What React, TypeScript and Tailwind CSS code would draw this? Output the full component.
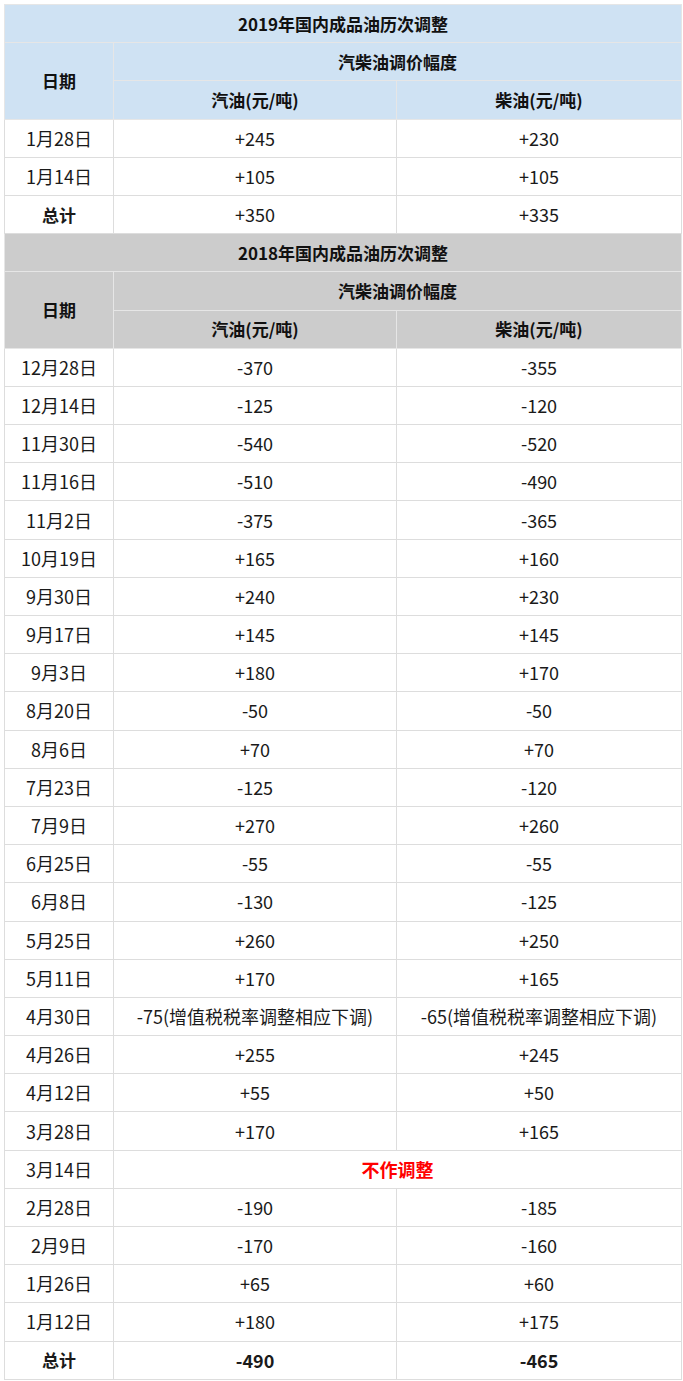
type Row = [string, string, string];

const rows2019: Row[] = [
  ["1月28日", "+245", "+230"],
  ["1月14日", "+105", "+105"],
];

const rows2018: Row[] = [
  ["12月28日", "-370", "-355"],
  ["12月14日", "-125", "-120"],
  ["11月30日", "-540", "-520"],
  ["11月16日", "-510", "-490"],
  ["11月2日", "-375", "-365"],
  ["10月19日", "+165", "+160"],
  ["9月30日", "+240", "+230"],
  ["9月17日", "+145", "+145"],
  ["9月3日", "+180", "+170"],
  ["8月20日", "-50", "-50"],
  ["8月6日", "+70", "+70"],
  ["7月23日", "-125", "-120"],
  ["7月9日", "+270", "+260"],
  ["6月25日", "-55", "-55"],
  ["6月8日", "-130", "-125"],
  ["5月25日", "+260", "+250"],
  ["5月11日", "+170", "+165"],
  ["4月30日", "-75(增值税税率调整相应下调)", "-65(增值税税率调整相应下调)"],
  ["4月26日", "+255", "+245"],
  ["4月12日", "+55", "+50"],
  ["3月28日", "+170", "+165"],
];

const rows2018b: Row[] = [
  ["2月28日", "-190", "-185"],
  ["2月9日", "-170", "-160"],
  ["1月26日", "+65", "+60"],
  ["1月12日", "+180", "+175"],
];

const cell = "h-[38.2px] border border-[#dddddd] p-0 text-center align-middle";
const head = "h-[38.2px] border border-[#e6e6e6] p-0 text-center align-middle font-bold text-[17px] text-[#111]";

const Header = ({ year, bg }: { year: string; bg: string }) => (
  <>
    <tr className={bg}>
      <td colSpan={3} className={head}>
        {year}年国内成品油历次调整
      </td>
    </tr>
    <tr className={bg}>
      <td rowSpan={2} className={head}>
        日期
      </td>
      <td colSpan={2} className={head}>
        汽柴油调价幅度
      </td>
    </tr>
    <tr className={bg}>
      <td className={head}>汽油(元/吨)</td>
      <td className={head}>柴油(元/吨)</td>
    </tr>
  </>
);

const DataRow = ({ r }: { r: Row }) => (
  <tr>
    <td className={cell}>{r[0]}</td>
    <td className={cell}>{r[1]}</td>
    <td className={cell}>{r[2]}</td>
  </tr>
);

export default function App() {
  return (
    <div className="min-h-screen bg-white pt-[4px] pl-[4px]">
      <table
        className="w-[677px] table-fixed border-collapse text-[18px] text-[#1a1a1a]"
        style={{ fontFamily: '"Noto Sans CJK SC", "Noto Sans", sans-serif' }}
      >
        <colgroup>
          <col className="w-[109px]" />
          <col className="w-[283px]" />
          <col className="w-[285px]" />
        </colgroup>
        <tbody>
          <Header year="2019" bg="bg-[#cfe2f3]" />
          {rows2019.map((r) => (
            <DataRow key={r[0]} r={r} />
          ))}
          <tr>
            <td className={`${cell} font-bold text-[17px]`}>总计</td>
            <td className={cell}>+350</td>
            <td className={cell}>+335</td>
          </tr>
          <Header year="2018" bg="bg-[#cccccc]" />
          {rows2018.map((r) => (
            <DataRow key={r[0]} r={r} />
          ))}
          <tr>
            <td className={cell}>3月14日</td>
            <td colSpan={2} className={`${cell} font-bold text-[#ff0000]`}>
              不作调整
            </td>
          </tr>
          {rows2018b.map((r) => (
            <DataRow key={r[0]} r={r} />
          ))}
          <tr>
            <td className={`${cell} font-bold text-[17px]`}>总计</td>
            <td className={`${cell} font-bold`}>-490</td>
            <td className={`${cell} font-bold`}>-465</td>
          </tr>
        </tbody>
      </table>
    </div>
  );
}
